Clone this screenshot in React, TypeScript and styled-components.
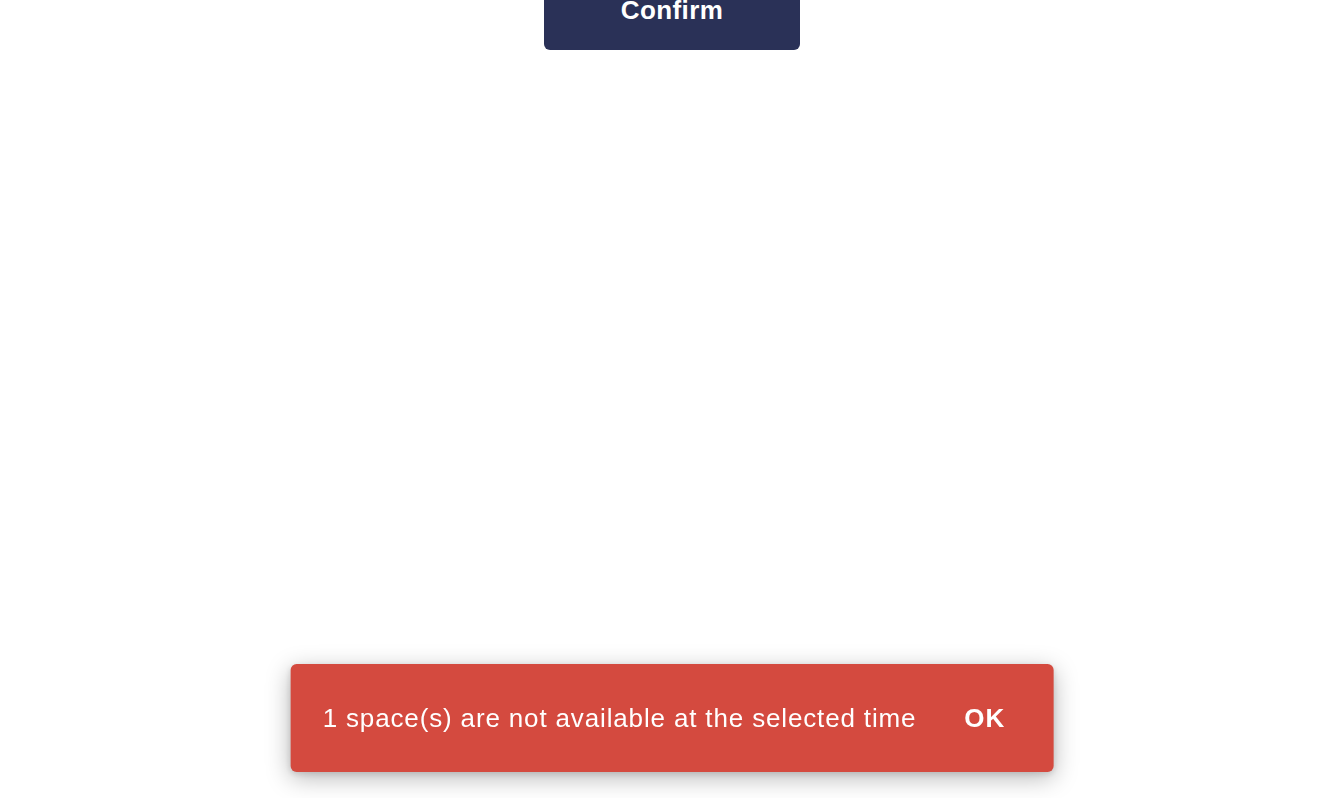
import React from 'react';
import styled, { createGlobalStyle } from 'styled-components';

const GlobalStyle = createGlobalStyle`
  html, body {
    margin: 0;
    padding: 0;
    background: #ffffff;
    font-family: "Liberation Sans", Arial, sans-serif;
    overflow: hidden;
  }
`;

const Page = styled.div`
  width: 1344px;
  height: 798px;
  display: flex;
  flex-direction: column;
  align-items: center;
`;

const ConfirmButton = styled.button`
  margin-top: -22px;
  width: 256px;
  height: 72px;
  padding: 0 0 8px;
  border: none;
  border-radius: 6px;
  background: #2a3157;
  color: #ffffff;
  font-family: "Liberation Sans", Arial, sans-serif;
  font-weight: 700;
  font-size: 26px;
  letter-spacing: 0.4px;
  cursor: pointer;
`;

const Snackbar = styled.div`
  position: fixed;
  left: 50%;
  bottom: 26px;
  transform: translateX(-50%);
  display: flex;
  align-items: center;
  height: 108px;
  box-sizing: border-box;
  padding: 0 48px 0 32px;
  gap: 48px;
  background: #d44a3f;
  border-radius: 6px;
  box-shadow: 0 6px 24px rgba(0, 0, 0, 0.28), 0 2px 6px rgba(0, 0, 0, 0.12);
  color: #ffffff;
`;

const Message = styled.span`
  font-size: 26px;
  white-space: nowrap;
  letter-spacing: 0.85px;
`;

const Action = styled.button`
  border: none;
  background: none;
  padding: 0;
  color: #ffffff;
  font-family: "Liberation Sans", Arial, sans-serif;
  font-weight: 700;
  font-size: 26px;
  letter-spacing: 1px;
  cursor: pointer;
`;

export default function App() {
  return (
    <Page>
      <GlobalStyle />
      <ConfirmButton>Confirm</ConfirmButton>
      <Snackbar>
        <Message>1 space(s) are not available at the selected time</Message>
        <Action>OK</Action>
      </Snackbar>
    </Page>
  );
}
